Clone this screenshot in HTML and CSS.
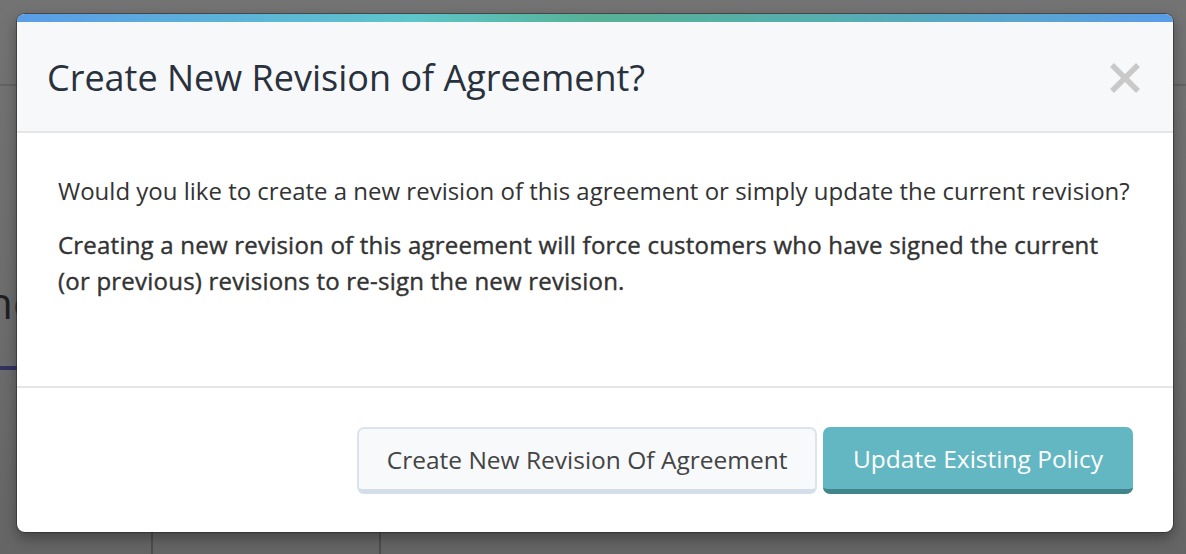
FILE: index.html
```html
<!DOCTYPE html>
<html>
<head>
<meta charset="utf-8">
<link rel="stylesheet" href="styles.css">
</head>
<body>
<div class="page">
  <div class="bg-line bg-line-top"></div>
  <div class="bg-text">ne</div>
  <div class="bg-purple"></div>
  <div class="bg-vline v1"></div>
  <div class="bg-vline v2"></div>
</div>
<div class="modal">
  <div class="modal-bar"></div>
  <div class="modal-header">
    <h1 class="modal-title">Create New Revision of Agreement?</h1>
    <svg class="modal-close" width="32" height="32" viewBox="0 0 32 32"><path d="M3 3 L29 29 M29 3 L3 29" stroke="#c9c9c9" stroke-width="5.5" fill="none"/></svg>
  </div>
  <div class="modal-body">
    <p>Would you like to create a new revision of this agreement or simply update the current revision?</p>
    <p class="strong">Creating a new revision of this agreement will force customers who have signed the current (or previous) revisions to re-sign the new revision.</p>
  </div>
  <div class="modal-footer">
    <button class="btn btn-light">Create New Revision Of Agreement</button>
    <button class="btn btn-teal">Update Existing Policy</button>
  </div>
</div>
</body>
</html>
```
FILE: styles.css
```css
html, body {
  margin: 0;
  padding: 0;
}
body {
  width: 1186px;
  height: 554px;
  overflow: hidden;
  background: #707070;
  font-family: "Open Sans", "Noto Sans", sans-serif;
  position: relative;
}
.page {
  position: absolute;
  inset: 0;
  background: linear-gradient(to bottom, #737373 0%, #6c6c6c 60%, #656565 100%);
}
.bg-line {
  position: absolute;
  left: 0;
  right: 0;
  height: 2px;
  background: #626262;
}
.bg-line-top { top: 84px; }
.bg-text {
  position: absolute;
  left: -14px;
  top: 272px;
  font-size: 44px;
  color: #1f1f22;
}
.bg-purple {
  position: absolute;
  left: 0;
  top: 366px;
  width: 40px;
  height: 4px;
  background: #34325f;
}
.bg-vline {
  position: absolute;
  top: 530px;
  bottom: 0;
  width: 2px;
  background: #4e4e4e;
}
.v1 { left: 151px; }
.v2 { left: 379px; }

.modal {
  position: absolute;
  left: 17px;
  top: 14px;
  width: 1156px;
  height: 518px;
  background: #fff;
  border-radius: 8px;
  overflow: hidden;
  box-shadow: 0 0 0 1px rgba(40,40,40,0.55), 0 6px 14px rgba(0,0,0,0.35);
  display: flex;
  flex-direction: column;
}
.modal-bar {
  height: 8px;
  flex: none;
  background: linear-gradient(to right, #5a9de8 0%, #5ec5cb 34%, #56b195 50%, #56aeb0 70%, #5a9de8 100%);
}
.modal-header {
  height: 111px;
  flex: none;
  box-sizing: border-box;
  background: #f7f8fa;
  border-bottom: 2px solid #e6e6e6;
  display: flex;
  align-items: center;
  justify-content: space-between;
  padding: 2px 32px 0 30px;
}
.modal-title {
  margin: 0;
  font-weight: 400;
  font-size: 36px;
  color: #28313c;
}
.modal-close {
  display: block;
}
.modal-body {
  height: 255px;
  flex: none;
  box-sizing: border-box;
  border-bottom: 2px solid #e6e6e6;
  padding: 40px 40px 0 41px;
  color: #333;
  font-size: 24px;
  line-height: 36px;
}
.modal-body p {
  margin: 0 0 18px 0;
}
.modal-body p.strong {
  letter-spacing: 0.22px;
  -webkit-text-stroke: 0.4px #333;
}
.modal-footer {
  flex: 1;
  display: flex;
  justify-content: flex-end;
  align-items: flex-start;
  gap: 6px;
  padding: 39px 40px 0 40px;
}
.btn {
  font-family: "Open Sans", "Noto Sans", sans-serif;
  font-size: 24.5px;
  height: 67px;
  box-sizing: border-box;
  border-radius: 7px;
  padding: 0 30px;
  cursor: pointer;
}
.btn-light {
  background: #f7f9fb;
  color: #444;
  border: 2px solid #dbe4ed;
  border-bottom: 5px solid #d3dee8;
  padding: 0 27.5px;
}
.btn-teal {
  background: #63b7c2;
  color: #fff;
  border: none;
  border-bottom: 5px solid #418489;
}
```
